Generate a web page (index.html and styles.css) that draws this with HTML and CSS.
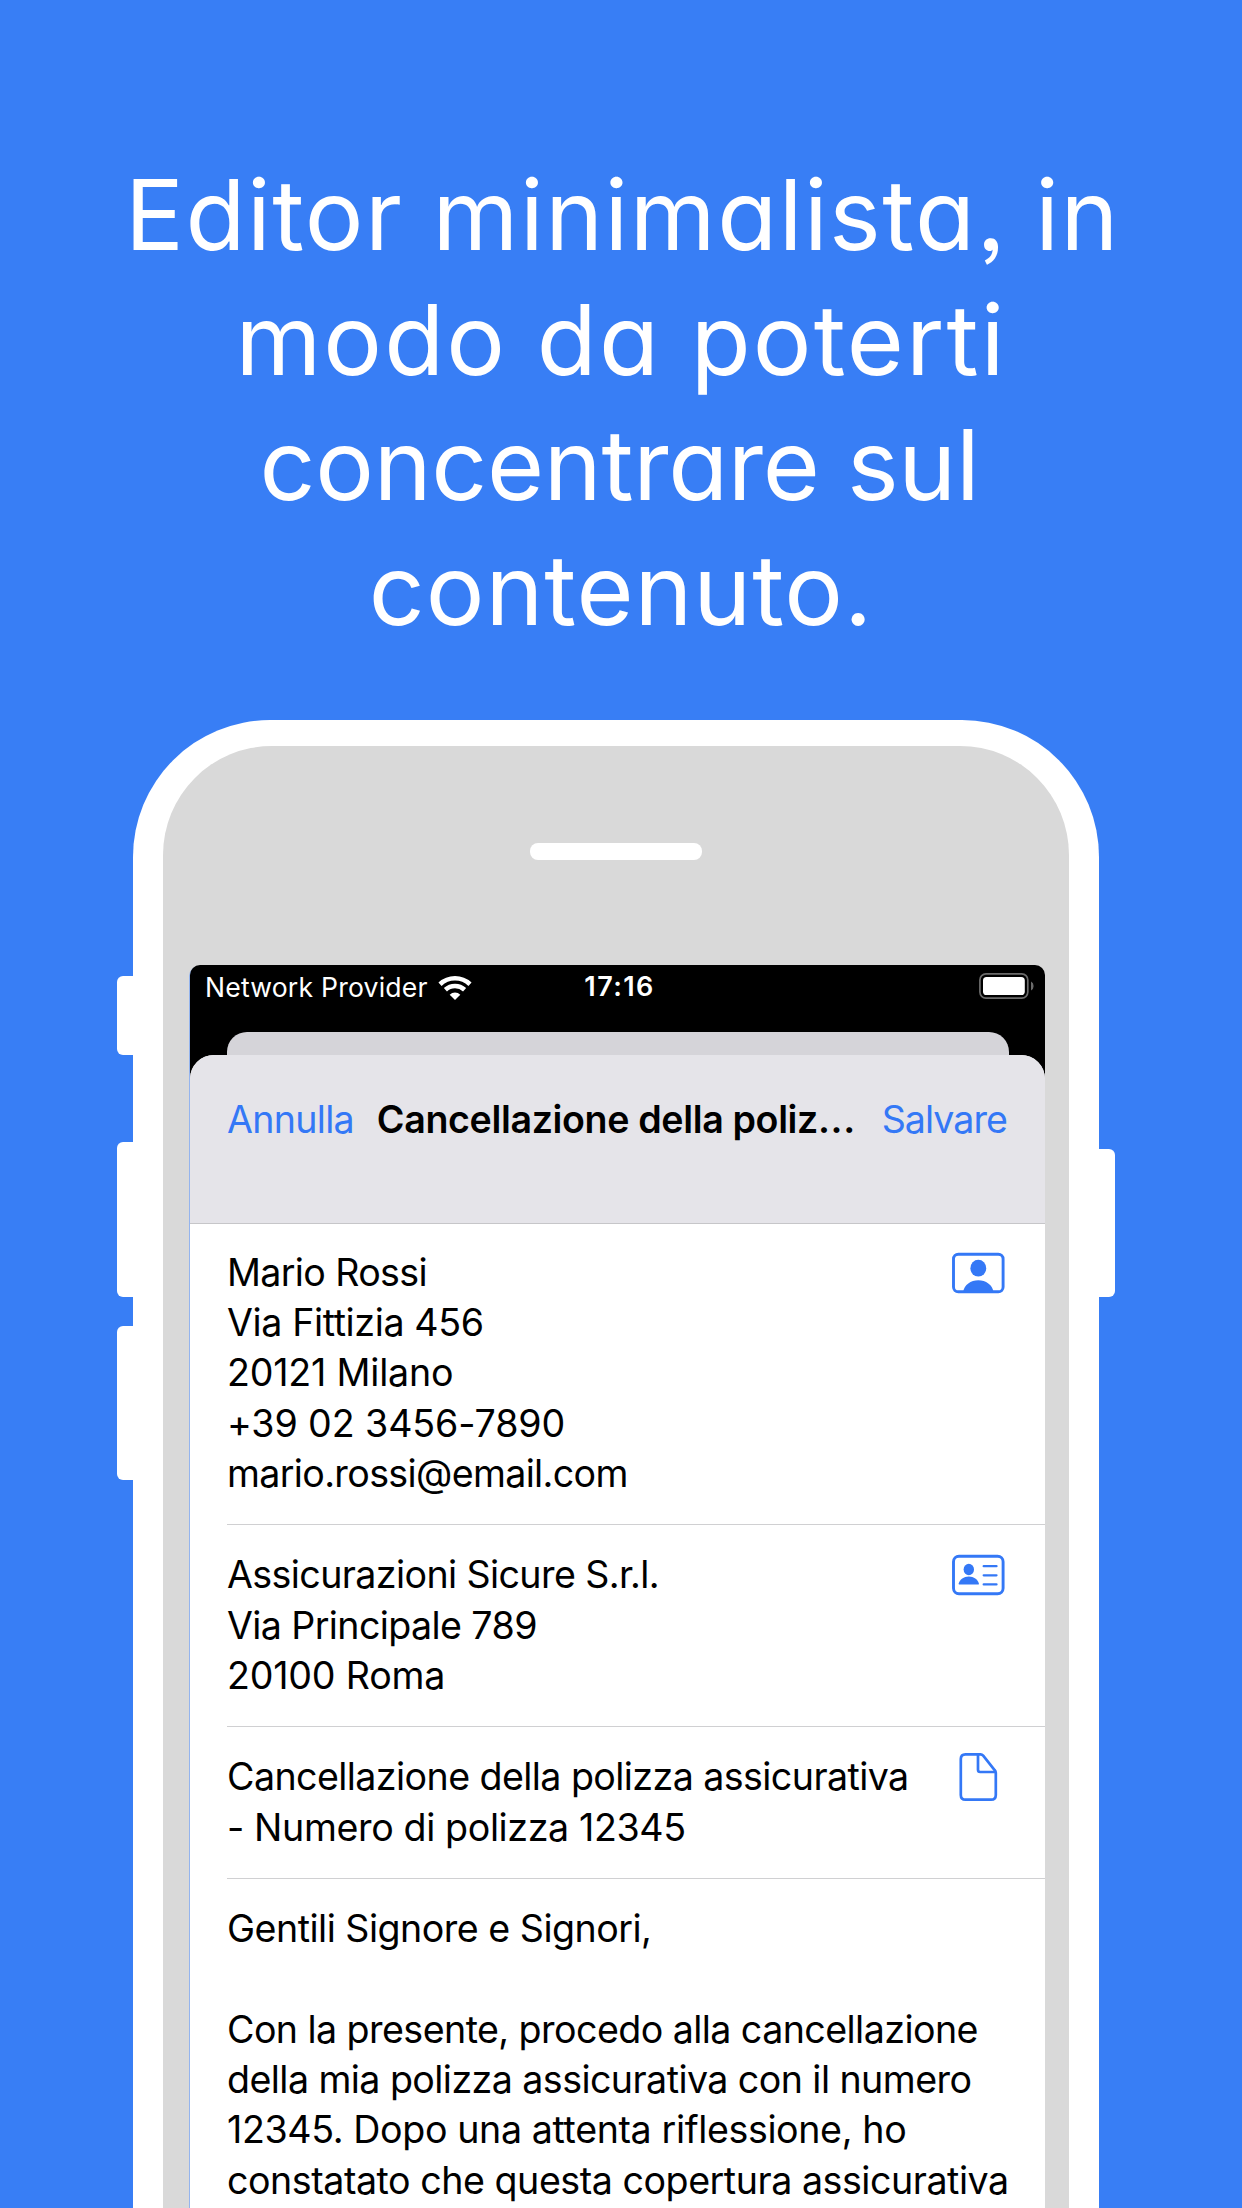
FILE: index.html
```
<!DOCTYPE html>
<html lang="it">
<head>
<meta charset="utf-8">
<title>Editor minimalista</title>
<link rel="stylesheet" href="styles.css">
</head>
<body>
<main class="promo">
  <h1 class="headline">
    <span class="headline-line h1">Editor minimalista, in</span>
    <span class="headline-line h2">modo da poterti</span>
    <span class="headline-line h3">concentrare sul</span>
    <span class="headline-line h4">contenuto.</span>
  </h1>

  <div class="device">
    <div class="keys keys-left">
      <i class="key key-mute"></i>
      <i class="key key-up"></i>
      <i class="key key-down"></i>
    </div>
    <div class="shell">
      <div class="face">
        <div class="speaker"></div>
        <div class="screen">
          <div class="status">
            <div class="carrier">
              <span>Network Provider</span>
              <svg class="wifi" viewBox="0 0 34 25" width="34" height="25">
                <g fill="none" stroke="#fff" stroke-width="4.6">
                  <path d="M2 9.2a22 22 0 0 1 30 0"/>
                  <path d="M7.4 14.8a14.2 14.2 0 0 1 19.2 0"/>
                </g>
                <path fill="#fff" d="M17 25l-5.3-5.3a7.8 7.8 0 0 1 10.6 0z"/>
              </svg>
            </div>
            <span class="time">17:16</span>
            <svg class="battery" viewBox="0 0 55 26" width="55" height="26">
              <rect x=".9" y=".9" width="47.9" height="24.2" rx="6" fill="none" stroke="#6b6b6b" stroke-width="1.7"/>
              <rect x="4" y="4" width="41.8" height="18" rx="3.6" fill="#fff"/>
              <path d="M52 8.5q2.6 1.4 2.6 4.5t-2.6 4.5z" fill="#6b6b6b"/>
            </svg>
          </div>
          <div class="backcard"></div>
          <div class="sheet">
            <header class="navbar">
              <a class="action cancel">Annulla</a>
              <strong class="title">Cancellazione della poliz<span class="dots">...</span></strong>
              <a class="action save">Salvare</a>
            </header>
            <section class="row sender">
              <p class="text">
                <span class="line tight">Mario Rossi</span>
                <span class="line ls-40">Via Fittizia 456</span>
                <span class="line ls-19">20121 Milano</span>
                <span class="line ls-10">+39 02 3456-7890</span>
                <span class="line tight">mario.rossi@email.com</span>
              </p>
              <svg class="icon" viewBox="0 0 53 48" width="53" height="48">
                <rect x="1.5" y="5.2" width="49.6" height="37.6" rx="4.8" fill="none" stroke="#3478f6" stroke-width="2.9"/>
                <ellipse cx="26.3" cy="19.2" rx="7.9" ry="8.4" fill="#3478f6"/>
                <path d="M11.2 42.5c1-6.6 7.6-11.300 15.100-11.300s14.100 4.700 15.100 11.300z" fill="#3478f6"/>
              </svg>
            </section>
            <section class="row">
              <p class="text">
                <span class="line ls-60">Assicurazioni Sicure S.r.l.</span>
                <span class="line ls-60">Via Principale 789</span>
                <span class="line ls-19">20100 Roma</span>
              </p>
              <svg class="icon" viewBox="0 0 53 48" width="53" height="48">
                <rect x="1.5" y="5.2" width="49.6" height="37.6" rx="5.5" fill="none" stroke="#3478f6" stroke-width="2.9"/>
                <ellipse cx="16.8" cy="18.5" rx="5.2" ry="5.7" fill="#3478f6"/>
                <path d="M7 33.5q-.4 0-.2-1.200c.9-4 5-6.900 10-6.900s9.100 2.900 10 6.900q.2 1.200-.2 1.200z" fill="#3478f6"/>
                <path d="M31.700 15.200h12.800M31.700 24.300h12.800M31.700 33.400h12.800" stroke="#3478f6" stroke-width="2.300" stroke-linecap="round"/>
              </svg>
            </section>
            <section class="row">
              <p class="text">
                <span class="line ls-57">Cancellazione della polizza assicurativa</span>
                <span class="line ls-37">- Numero di polizza 12345</span>
              </p>
              <svg class="icon" viewBox="0 0 53 48" width="53" height="48">
                <path d="M28.500 1.400H13.500q-4.700 0-4.700 4.700v35.800q0 4.700 4.700 4.700h25.600q4.700 0 4.700-4.700V19.800q0-1.600-1.200-2.800L31.200 2.600q-1.100-1.200-2.700-1.200z" fill="none" stroke="#3478f6" stroke-width="2.700"/>
                <path d="M26 1.800v15q0 2.200 2.200 2.200h15" fill="none" stroke="#3478f6" stroke-width="2.700"/>
              </svg>
            </section>
            <section class="row body">
              <p class="text">
                <span class="line ls-50">Gentili Signore e Signori,</span>
                <span class="line"></span>
                <span class="line ls-55">Con la presente, procedo alla cancellazione</span>
                <span class="line ls-55">della mia polizza assicurativa con il numero</span>
                <span class="line ls-37">12345. Dopo una attenta riflessione, ho</span>
                <span class="line ls-45">constatato che questa copertura assicurativa</span>
              </p>
            </section>
          </div>
        </div>
      </div>
    </div>
    <div class="keys keys-right">
      <i class="key key-power"></i>
    </div>
  </div>
</main>
</body>
</html>
```
FILE: styles.css
```
* { box-sizing: border-box; }

body {
  margin: 0;
  background: #387ef5;
  font-family: Inter, "Liberation Sans", sans-serif;
}

.promo {
  width: 1242px;
  height: 2208px;
  overflow: hidden;
  display: flex;
  flex-direction: column;
}

/* Headline */
.headline {
  margin: 0;
  padding-top: 152px;
  height: 720px;
  flex: none;
  color: #fff;
  font-size: 98px;
  font-weight: 400;
  line-height: 125px;
  text-align: center;
  font-feature-settings: "cv11", "ss03";
}
.headline-line { display: block; white-space: nowrap; }
.h1 { letter-spacing: 1.5px; padding-left: 3px; }
.h2 { letter-spacing: 2.1px; }
.h3 { letter-spacing: -0.3px; padding-right: 3px; }
.h4 { letter-spacing: 0.95px; }

/* Phone */
.device {
  display: flex;
  flex: none;
  padding-left: 117px;
}
.keys {
  width: 16px;
  display: flex;
  flex-direction: column;
}
.key { display: block; flex: none; background: #fff; }
.keys-left .key { border-radius: 6px 0 0 6px; }
.keys-right .key { border-radius: 0 6px 6px 0; }
.key-mute { margin-top: 255.5px; height: 79.5px; }
.key-up { margin-top: 87px; height: 154.5px; }
.key-down { margin-top: 29px; height: 154.5px; }
.key-power { margin-top: 429px; height: 147.5px; }

.shell {
  width: 966px;
  height: 1488px;
  padding: 25.5px 30px 0;
  background: #fff;
  border-radius: 137px 137px 0 0;
}
.face {
  height: 100%;
  padding: 97.5px 24px 0 27px;
  background: #d9d9d9;
  border-radius: 109px 109px 0 0;
  display: flex;
  flex-direction: column;
}
.speaker {
  align-self: center;
  width: 172px;
  height: 16.5px;
  flex: none;
  margin-right: 4px;
  border-radius: 8px;
  background: #fff;
}
.screen {
  flex: 1;
  min-height: 0;
  margin-top: 105.5px;
  display: flex;
  flex-direction: column;
  background: #000;
  border-radius: 10px 10px 0 0;
  box-shadow: -1px 1px 0 #94b4ee;
  overflow: hidden;
}

/* Status bar */
.status {
  height: 67px;
  flex: none;
  display: grid;
  grid-template-columns: 1fr auto 1fr;
  align-items: start;
  padding: 8px 11px 0 15px;
  color: #fff;
  font-size: 26.6px;
  line-height: 28px;
}
.carrier {
  display: flex;
  align-items: center;
  gap: 10px;
  letter-spacing: 0.2px;
}
.time {
  font-size: 27px;
  font-weight: 600;
  letter-spacing: 1.4px;
}
.battery { justify-self: end; }

.backcard {
  height: 23px;
  flex: none;
  margin: 0 36px 0 37px;
  background: #d5d4d9;
  border-radius: 20px 20px 0 0;
}
.sheet {
  flex: 1;
  min-height: 0;
  background: #fff;
  border-radius: 24px 24px 0 0;
  overflow: hidden;
}

/* Sheet header */
.navbar {
  height: 169px;
  padding: 40px 38px 0 37px;
  display: flex;
  justify-content: space-between;
  background: #e5e4e9;
  border-bottom: 1.5px solid #c6c6c9;
  font-size: 37.6px;
  line-height: 50px;
  white-space: nowrap;
}
.action { color: #3478f6; }
.cancel { letter-spacing: -0.7px; }
.save { letter-spacing: -0.95px; }
.title {
  margin-right: 3px;
  font-weight: 600;
  letter-spacing: -0.35px;
  color: #000;
}
.dots { letter-spacing: 0.6px; }

/* Letter fields */
.row {
  display: flex;
  justify-content: space-between;
  margin-left: 37px;
  padding: 25px 40px 25px 0;
  border-bottom: 1px solid #d0d0d2;
}
.row.sender { padding-top: 23.5px; }
.row.body { border: 0; padding-right: 0; }
.text {
  margin: 0;
  color: #000;
  font-size: 37.6px;
  line-height: 50.35px;
  white-space: nowrap;
}
.line { display: block; min-height: 50.35px; }
.tight { letter-spacing: -0.64px; }
.ls-60 { letter-spacing: -0.6px; }
.ls-57 { letter-spacing: -0.57px; }
.ls-55 { letter-spacing: -0.56px; }
.ls-50 { letter-spacing: -0.5px; }
.ls-45 { letter-spacing: -0.455px; }
.ls-40 { letter-spacing: -0.38px; }
.ls-37 { letter-spacing: -0.37px; }
.ls-19 { letter-spacing: -0.19px; }
.ls-10 { letter-spacing: -0.1px; }
.icon { flex: none; margin-top: 1px; }
```
